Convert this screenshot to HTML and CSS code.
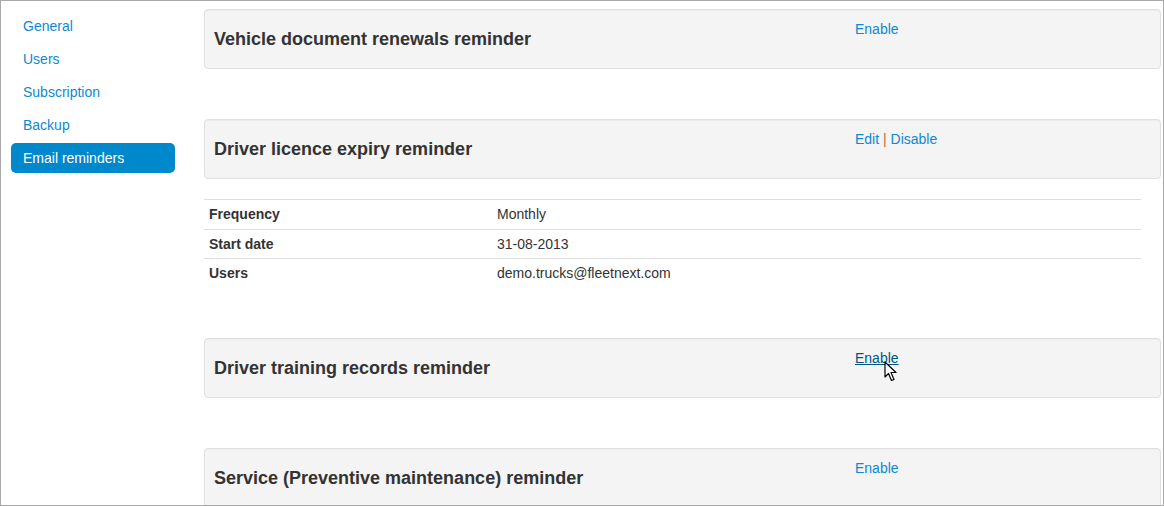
FILE: index.html
```html
<!DOCTYPE html>
<html>
<head>
<meta charset="utf-8">
<link rel="stylesheet" href="styles.css">
</head>
<body>
<div class="frame">
  <nav class="sidebar">
    <a class="nav-item" href="#">General</a>
    <a class="nav-item" href="#">Users</a>
    <a class="nav-item" href="#">Subscription</a>
    <a class="nav-item" href="#">Backup</a>
    <a class="nav-item active" href="#">Email reminders</a>
  </nav>
  <main class="content">
    <section class="reminder">
      <div class="well">
        <h4 class="title">Vehicle document renewals reminder</h4>
        <div class="actions"><a href="#">Enable</a></div>
      </div>
    </section>
    <section class="reminder">
      <div class="well">
        <h4 class="title">Driver licence expiry reminder</h4>
        <div class="actions"><a href="#">Edit</a> <span class="sep">|</span> <a href="#">Disable</a></div>
      </div>
      <table class="details">
        <tr class="first"><th>Frequency</th><td>Monthly</td></tr>
        <tr><th>Start date</th><td>31-08-2013</td></tr>
        <tr><th>Users</th><td>demo.trucks@fleetnext.com</td></tr>
      </table>
    </section>
    <section class="reminder">
      <div class="well">
        <h4 class="title">Driver training records reminder</h4>
        <div class="actions"><a class="hover" href="#">Enable</a>
          <svg class="cursor" width="14" height="22" viewBox="0 0 14 22"><path d="M1 1 L1 16 L4.5 12.5 L7.5 19.5 L10 18.5 L7 11.5 L12 11.5 Z" fill="#fff" stroke="#000" stroke-width="1.2" stroke-linejoin="round"/></svg>
        </div>
      </div>
    </section>
    <section class="reminder">
      <div class="well">
        <h4 class="title">Service (Preventive maintenance) reminder</h4>
        <div class="actions"><a href="#">Enable</a></div>
      </div>
    </section>
  </main>
</div>
</body>
</html>
```
FILE: styles.css
```css
* { box-sizing: border-box; }
html, body { margin: 0; padding: 0; background: #fff; }
body {
  font-family: "Liberation Sans", Arial, sans-serif;
  font-size: 14px;
  line-height: 20px;
  color: #333;
}
.frame {
  width: 1164px;
  height: 506px;
  border: 1px solid #a9a9a9;
  overflow: hidden;
  display: flex;
  align-items: flex-start;
}
.sidebar {
  width: 164px;
  flex: none;
  margin-left: 10px;
  margin-top: 10px;
  display: flex;
  flex-direction: column;
  gap: 3px;
}
.nav-item {
  display: block;
  height: 30px;
  line-height: 20px;
  padding: 5px 12px;
  color: #0e88cf;
  text-decoration: none;
  border-radius: 5px;
}
.nav-item.active {
  background: #0088cc;
  color: #fff;
}
.content {
  margin-left: 29px;
  margin-top: 8px;
  width: 957px;
  flex: none;
}
.reminder { margin-bottom: 50px; }
.well {
  height: 60px;
  background: #f4f4f4;
  border: 1px solid #e0e0e0;
  border-radius: 4px;
  box-shadow: inset 0 1px 1px rgba(0,0,0,0.03);
  display: grid;
  grid-template-columns: 641px 1fr;
  padding-left: 9px;
}
.title {
  margin: 0;
  align-self: center;
  font-size: 18px;
  font-weight: bold;
  line-height: 20px;
  color: #333;
}
.actions {
  position: relative;
  margin-top: 9px;
  line-height: 20px;
}
.actions a { color: #0e88cf; text-decoration: none; }
.actions a.hover { color: #005580; text-decoration: underline; }
.sep { color: #c0693c; }
.cursor {
  position: absolute;
  left: 29px;
  top: 13px;
}
.details {
  width: 937px;
  margin-top: 20px;
  border-collapse: collapse;
  margin-bottom: 2px;
}
.details th, .details td {
  text-align: left;
  padding: 4px 5px;
  height: 29px;
  line-height: 20px;
  border-top: 1px solid #dddddd;
  vertical-align: top;
}
.details .first th, .details .first td { height: 30px; }
.details th { width: 288px; font-weight: bold; }
```
